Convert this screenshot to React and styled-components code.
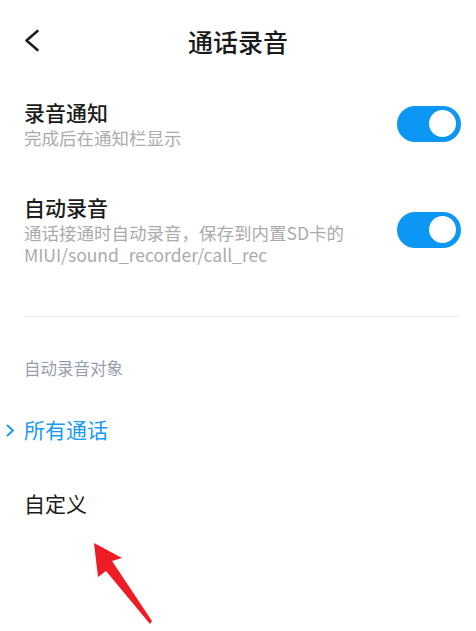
import React, { useState } from 'react';
import styled, { createGlobalStyle } from 'styled-components';

const GlobalStyle = createGlobalStyle`
  html, body {
    margin: 0;
    padding: 0;
    background: #ffffff;
  }
  body {
    font-family: 'Noto Sans CJK SC', 'Noto Sans', sans-serif;
    -webkit-font-smoothing: antialiased;
  }
`;

const settings = [
  {
    id: 'notify',
    title: '录音通知',
    desc: ['完成后在通知栏显示'],
  },
  {
    id: 'auto',
    title: '自动录音',
    desc: ['通话接通时自动录音，保存到内置SD卡的', 'MIUI/sound_recorder/call_rec'],
  },
];

const targets = [
  { id: 'all', label: '所有通话' },
  { id: 'custom', label: '自定义' },
];

export default function App() {
  const [enabled, setEnabled] = useState({ notify: true, auto: true });
  const [target, setTarget] = useState('all');

  const toggle = id => setEnabled(prev => ({ ...prev, [id]: !prev[id] }));

  return (
    <Page>
      <GlobalStyle />
      <Header>
        <BackButton aria-label="返回">
          <svg width="16" height="24" viewBox="0 0 16 24">
            <polyline
              points="13.5,2 2.5,11.5 13.5,21"
              fill="none"
              stroke="#1c1c1c"
              strokeWidth="2.6"
              strokeLinecap="round"
              strokeLinejoin="round"
            />
          </svg>
        </BackButton>
        <Title>通话录音</Title>
        <span />
      </Header>

      {settings.map(item => (
        <SettingRow key={item.id}>
          <SettingText>
            <SettingTitle>{item.title}</SettingTitle>
            {item.desc.map(line => (
              <SettingDesc key={line}>{line}</SettingDesc>
            ))}
          </SettingText>
          <Switch $on={enabled[item.id]} onClick={() => toggle(item.id)}>
            <Knob />
          </Switch>
        </SettingRow>
      ))}

      <Divider />

      <SectionLabel>自动录音对象</SectionLabel>

      {targets.map(t => (
        <Option key={t.id} $active={target === t.id} onClick={() => setTarget(t.id)}>
          <Marker>
            {target === t.id && (
              <svg width="9" height="13" viewBox="0 0 9 13">
                <polyline
                  points="1.5,1.5 7,6.5 1.5,11.5"
                  fill="none"
                  stroke="#1a9bf0"
                  strokeWidth="2"
                  strokeLinecap="round"
                  strokeLinejoin="round"
                />
              </svg>
            )}
          </Marker>
          {t.label}
        </Option>
      ))}

      {/* red annotation arrow pointing at 自定义 */}
      <Annotation width="70" height="90" viewBox="0 0 70 90">
        <polygon
          points="4,3 32,18 22,21 62,81 60,84 16,31 8,37"
          fill="#ee1c25"
        />
      </Annotation>
    </Page>
  );
}

const Page = styled.div`
  position: relative;
  width: 476px;
  height: 631px;
  overflow: hidden;
  background: #ffffff;
`;

const Header = styled.header`
  display: grid;
  grid-template-columns: 1fr auto 1fr;
  align-items: center;
  padding: 25px 0 19px;
`;

const BackButton = styled.button`
  display: flex;
  align-items: center;
  justify-self: start;
  margin-left: 24px;
  padding: 0;
  border: none;
  background: none;
  cursor: pointer;
`;

const Title = styled.h1`
  margin: 0;
  font-size: 25px;
  line-height: 32px;
  font-weight: 500;
  color: #1a1a1a;
`;

const SettingRow = styled.div`
  display: flex;
  align-items: center;
  justify-content: space-between;
  padding: 22px 15px 22px 24px;
`;

const SettingText = styled.div`
  display: flex;
  flex-direction: column;
`;

const SettingTitle = styled.div`
  font-size: 21px;
  line-height: 28px;
  font-weight: 500;
  color: #1c1c1c;
  margin-bottom: 1px;
`;

const SettingDesc = styled.div`
  font-size: 17.5px;
  line-height: 22px;
  color: #ababab;
`;

const Switch = styled.div`
  display: flex;
  align-items: center;
  justify-content: ${({ $on }) => ($on ? 'flex-end' : 'flex-start')};
  flex-shrink: 0;
  width: 64px;
  height: 36px;
  padding: 0 5px;
  box-sizing: border-box;
  border-radius: 18px;
  background: ${({ $on }) => ($on ? '#0c97f5' : '#d9d9d9')};
  cursor: pointer;
`;

const Knob = styled.span`
  width: 27px;
  height: 27px;
  border-radius: 50%;
  background: #ffffff;
`;

const Divider = styled.hr`
  margin: 28px 16px 0 24px;
  border: none;
  border-top: 1px solid #ececec;
`;

const SectionLabel = styled.div`
  padding: 40px 24px 13px;
  font-size: 16.5px;
  line-height: 22px;
  color: #989db2;
`;

const Option = styled.div`
  display: flex;
  align-items: center;
  padding: 23px 24px 23px 6px;
  font-size: 21px;
  line-height: 28px;
  color: ${({ $active }) => ($active ? '#1a9bf0' : '#1c1c1c')};
  cursor: pointer;
`;

const Marker = styled.span`
  display: flex;
  align-items: center;
  width: 18px;
  flex-shrink: 0;
  margin-top: 2px;
`;

const Annotation = styled.svg`
  position: absolute;
  left: 90px;
  top: 540px;
`;
